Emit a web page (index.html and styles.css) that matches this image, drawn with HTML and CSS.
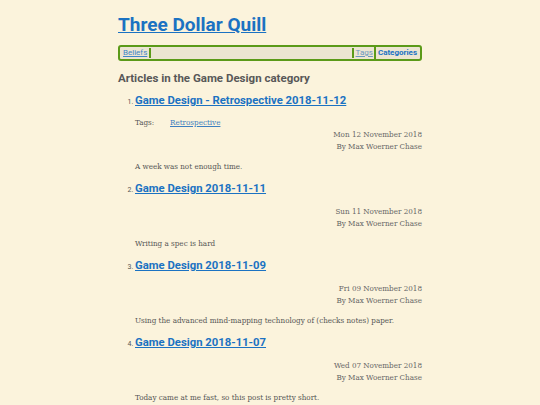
FILE: index.html
```html
<!DOCTYPE html>
<html>
<head>
<meta charset="utf-8">
<link rel="stylesheet" href="styles.css">
</head>
<body>
<div class="page">
  <header class="site-header">
    <h1 class="site-title"><a href="#">Three Dollar Quill</a></h1>
    <nav class="nav">
      <a class="nav-link" href="#">Beliefs</a>
      <span class="nav-spacer"></span>
      <a class="nav-link nav-tags" href="#">Tags</a>
      <a class="nav-link nav-current" href="#">Categories</a>
    </nav>
  </header>
  <main>
    <h2 class="page-heading">Articles in the Game Design category</h2>
    <ol class="articles">
      <li class="article">
        <h3 class="article-title"><a href="#">Game Design - Retrospective 2018-11-12</a></h3>
        <div class="tags"><span class="tags-label">Tags:</span><a href="#">Retrospective</a></div>
        <div class="meta">
          <div>Mon 12 November 2018</div>
          <div>By Max Woerner Chase</div>
        </div>
        <p class="summary">A week was not enough time.</p>
      </li>
      <li class="article">
        <h3 class="article-title"><a href="#">Game Design 2018-11-11</a></h3>
        <div class="meta">
          <div>Sun 11 November 2018</div>
          <div>By Max Woerner Chase</div>
        </div>
        <p class="summary">Writing a spec is hard</p>
      </li>
      <li class="article">
        <h3 class="article-title"><a href="#">Game Design 2018-11-09</a></h3>
        <div class="meta">
          <div>Fri 09 November 2018</div>
          <div>By Max Woerner Chase</div>
        </div>
        <p class="summary">Using the advanced mind-mapping technology of (checks notes) paper.</p>
      </li>
      <li class="article">
        <h3 class="article-title"><a href="#">Game Design 2018-11-07</a></h3>
        <div class="meta">
          <div>Wed 07 November 2018</div>
          <div>By Max Woerner Chase</div>
        </div>
        <p class="summary">Today came at me fast, so this post is pretty short.</p>
      </li>
    </ol>
  </main>
</div>
</body>
</html>
```
FILE: styles.css
```css
html, body {
  margin: 0;
  padding: 0;
  background: #fbf3dc;
}
body {
  font-family: "DejaVu Serif Condensed", "DejaVu Serif", serif;
  color: #555;
}
.page {
  width: 304px;
  margin: 0 auto;
  padding-top: 13px;
}
.site-title {
  margin: 0;
  font-family: Roboto, sans-serif;
  font-size: 19px;
  line-height: 24px;
  font-weight: 700;
}
.site-title a {
  color: #1b72c2;
}
.nav {
  margin-top: 8px;
  display: flex;
  align-items: center;
  height: 12px;
  border: 2px solid #5b9a19;
  border-radius: 3px;
  background: #ece5d2;
  padding: 0 2px;
  font-family: Roboto, sans-serif;
  font-size: 8px;
  line-height: 12px;
}
.nav-link {
  color: #3f86c8;
  padding: 0 1px;
}
.nav-spacer {
  flex: 1;
  align-self: stretch;
  border-left: 2px solid #5b9a19;
  border-right: 2px solid #5b9a19;
  margin: 1px;
}
.nav-tags {
  color: #6c97bf;
}
.nav-current {
  border-left: 2px solid #5b9a19;
  font-weight: 700;
  text-decoration: none;
  color: #1b72c2;
  padding-left: 2px;
}
.page-heading {
  margin: 9px 0 0 0;
  font-family: Roboto, sans-serif;
  font-size: 11.5px;
  line-height: 16px;
  font-weight: 700;
  color: #585858;
}
.articles {
  margin: 7px 0 0 0;
  padding-left: 17px;
  font-size: 7px;
}
.article::marker {
  font-family: Roboto, sans-serif;
  color: #555;
}
.article-title {
  margin: 0;
  font-family: Roboto, sans-serif;
  font-size: 11.3px;
  line-height: 16px;
  font-weight: 700;
}
.article-title a {
  color: #1b72c2;
}
.tags {
  margin-top: 9px;
  font-size: 8px;
  line-height: 10px;
  display: flex;
}
.tags-label {
  width: 35px;
}
.tags a {
  color: #3d7fc0;
}
.meta {
  margin-top: 1px;
  text-align: right;
  font-size: 8px;
  line-height: 12px;
  color: #666;
}
.article:not(:first-child) .meta {
  margin-top: 9px;
}
.summary {
  margin: 9px 0 0 0;
  font-size: 8px;
  line-height: 10px;
  color: #555;
  padding-bottom: 9px;
}
```
